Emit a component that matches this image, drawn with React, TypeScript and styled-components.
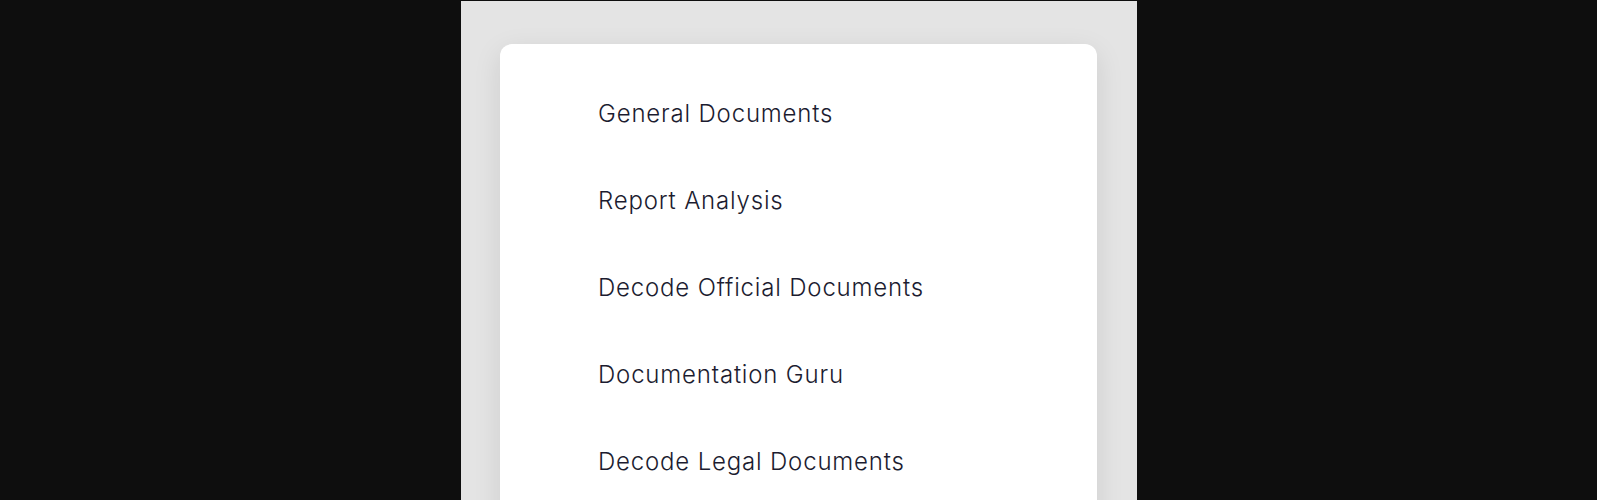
import React from 'react';
import styled, { createGlobalStyle } from 'styled-components';

const GlobalStyle = createGlobalStyle`
  html, body {
    margin: 0;
    padding: 0;
    background: #0e0e0e;
    font-family: Inter, "Liberation Sans", sans-serif;
  }
`;

const items = [
  'General Documents',
  'Report Analysis',
  'Decode Official Documents',
  'Documentation Guru',
  'Decode Legal Documents',
];

export default function App() {
  return (
    <>
      <GlobalStyle />
      <Page>
        <Panel>
          <Card>
            {items.map((label) => (
              <Item key={label}>{label}</Item>
            ))}
          </Card>
        </Panel>
      </Page>
    </>
  );
}

const Page = styled.div`
  height: 500px;
  overflow: hidden;
  display: flex;
  justify-content: flex-start;
  padding-top: 1px;
  padding-left: 461px;
  box-sizing: border-box;
`;

const Panel = styled.div`
  width: 676px;
  height: 499px;
  background: #e4e4e4;
  padding: 43px 40px 0 39px;
  box-sizing: border-box;
  overflow: hidden;
`;

const Card = styled.ul`
  margin: 0;
  list-style: none;
  background: #ffffff;
  border-radius: 12px;
  padding: 26px 0 0 98px;
  height: 600px;
  box-shadow: 0 8px 28px rgba(0, 0, 0, 0.1);
`;

const Item = styled.li`
  height: 87px;
  line-height: 87px;
  font-size: 24px;
  font-weight: 300;
  color: #1c1c30;
  letter-spacing: 0.82px;
`;
